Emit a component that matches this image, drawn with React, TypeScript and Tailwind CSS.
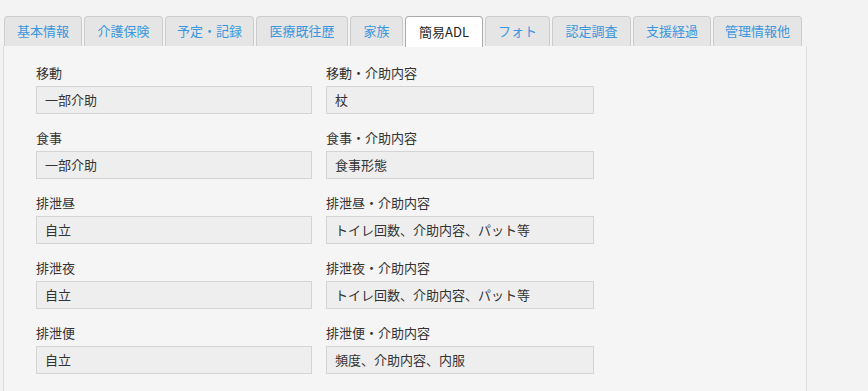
const TABS = [
  { label: '基本情報', w: 'w-[78px]' },
  { label: '介護保険', w: 'w-[79px]' },
  { label: '予定・記録', w: 'w-[89px]' },
  { label: '医療既往歴', w: 'w-[92px]' },
  { label: '家族', w: 'w-[53px]' },
  { label: '簡易ADL', w: 'w-[78px]' },
  { label: 'フォト', w: 'w-[65px]' },
  { label: '認定調査', w: 'w-[79px]' },
  { label: '支援経過', w: 'w-[78px]' },
  { label: '管理情報他', w: 'w-[89px]' },
]
const ACTIVE = '簡易ADL'

const ROWS = [
  { label: '移動', value: '一部介助', detail: '杖' },
  { label: '食事', value: '一部介助', detail: '食事形態' },
  { label: '排泄昼', value: '自立', detail: 'トイレ回数、介助内容、パット等' },
  { label: '排泄夜', value: '自立', detail: 'トイレ回数、介助内容、パット等' },
  { label: '排泄便', value: '自立', detail: '頻度、介助内容、内服' },
  { label: '入浴', value: '一部介助', detail: '' },
]

function Field({ label, value, width }: { label: string; value: string; width: string }) {
  return (
    <div className={width}>
      <p className="h-[18px] leading-[18px] mb-1 text-[13px] text-[#333]">{label}</p>
      <div className="h-[28px] leading-[26px] border border-[#d4d4d4] bg-[#eeeeee] pl-2 text-[13px] text-[#333]">
        {value}
      </div>
    </div>
  )
}

export default function App() {
  return (
    <div
      className="h-[391px] w-[868px] overflow-hidden bg-[#f3f3f3] pt-4"
      style={{ fontFamily: '"Noto Sans CJK JP", "Noto Sans", sans-serif' }}
    >
      {/* Tabs */}
      <div className="flex gap-[2px] pl-1 relative z-10">
        {TABS.map((t) => {
          const active = t.label === ACTIVE
          return (
            <div
              key={t.label}
              className={
                active
                  ? `${t.w} h-[31px] -mb-px text-center leading-[29px] text-[13px] text-[#222] bg-white border border-b-0 border-[#aaaaaa] rounded-t-[4px]`
                  : `${t.w} h-[30px] text-center leading-[28px] text-[13px] text-[#3b97dd] bg-[#e5e5e5] border border-b-0 border-[#cccccc] rounded-t-[4px]`
              }
            >
              {t.label}
            </div>
          )
        })}
      </div>

      {/* Panel */}
      <div className="ml-[3px] w-[804px] h-[400px] border-x border-[#dddddd] bg-[#f5f5f5] pl-[32px] pt-[18px]">
        <div className="flex flex-col gap-[15px]">
          {ROWS.map((r) => (
            <div key={r.label} className="flex gap-[14px]">
              <Field label={r.label} value={r.value} width="w-[276px]" />
              <Field label={`${r.label}・介助内容`} value={r.detail} width="w-[268px]" />
            </div>
          ))}
        </div>
      </div>
    </div>
  )
}
